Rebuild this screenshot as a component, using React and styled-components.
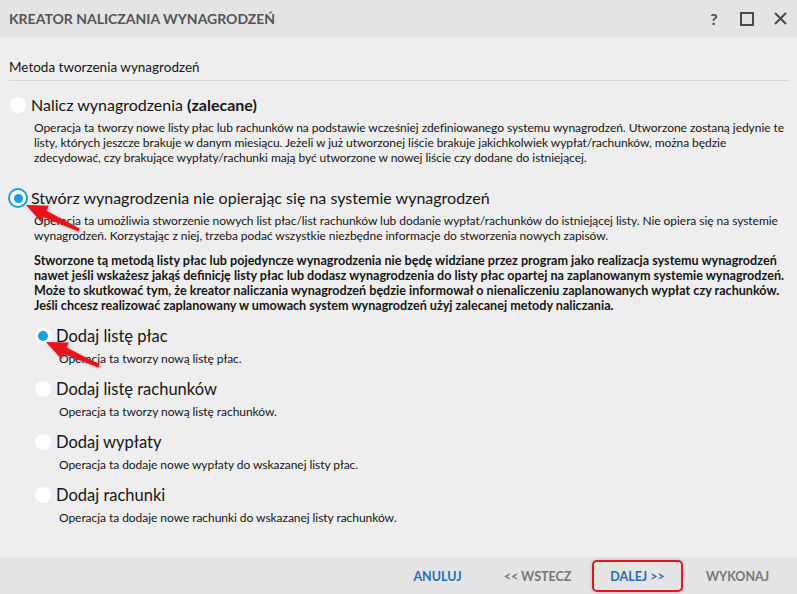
import React from 'react';
import styled, { createGlobalStyle } from 'styled-components';

const GlobalStyle = createGlobalStyle`
  html, body {
    margin: 0;
    padding: 0;
    background: #eeeeee;
  }
  body {
    font-family: Lato, "Open Sans", sans-serif;
    color: #161616;
  }
`;

const Window = styled.div`
  position: relative;
  width: 797px;
  height: 594px;
  display: flex;
  flex-direction: column;
  background: #eeeeee;
  overflow: hidden;
`;

const TitleBar = styled.div`
  height: 37px;
  flex: 0 0 37px;
  display: flex;
  align-items: center;
  justify-content: space-between;
  padding: 0 10px 0 9px;
  background: #e4e4e4;
`;

const Title = styled.div`
  font-size: 14px;
  font-weight: 700;
  color: #555555;
`;

const WindowButtons = styled.div`
  display: flex;
  align-items: center;
  gap: 20px;
  color: #4a4a4a;
`;

const HelpGlyph = styled.span`
  font-size: 16px;
  font-weight: 700;
  width: 12px;
  text-align: center;
`;

const Body = styled.div`
  flex: 1;
  padding: 21px 8px 0 9px;
`;

const SectionHeader = styled.div`
  font-size: 13.5px;
  line-height: 18px;
  padding-bottom: 4px;
  border-bottom: 1px solid #d4d4d4;
`;

const Option = styled.div`
  margin-top: ${({ gap }) => gap}px;
  padding-left: ${({ indent }) => indent}px;
`;

const OptionRow = styled.label`
  display: flex;
  align-items: center;
  gap: 5px;
  font-size: ${({ small }) => (small ? 16.5 : 16)}px;
  line-height: 22px;
`;

const Radio = styled.span`
  width: 16px;
  height: 16px;
  flex: 0 0 16px;
  border-radius: 50%;
  background: #ffffff;
  box-shadow: ${({ focused }) => (focused ? '0 0 0 2px #1a9fe0' : 'none')};
  display: flex;
  align-items: center;
  justify-content: center;

  &::after {
    content: '';
    display: ${({ checked }) => (checked ? 'block' : 'none')};
    width: ${({ focused }) => (focused ? 9 : 10)}px;
    height: ${({ focused }) => (focused ? 9 : 10)}px;
    border-radius: 50%;
    background: #1a9fe0;
  }
`;

const Desc = styled.div`
  margin-top: ${({ gap }) => gap || 4}px;
  padding-left: ${({ indent }) => indent}px;
  font-size: ${({ bold }) => (bold ? 12.6 : 12)}px;
  line-height: 15px;
  font-weight: ${({ bold }) => (bold ? 700 : 400)};
  white-space: nowrap;
  letter-spacing: ${({ bold }) => (bold ? '0' : '-0.05px')};
`;

const Footer = styled.div`
  height: 37px;
  flex: 0 0 37px;
  display: flex;
  align-items: center;
  justify-content: flex-end;
  gap: 9px;
  padding-right: 14px;
  background: #e4e4e4;
`;

const FooterButton = styled.button`
  width: 91px;
  height: 32px;
  margin-top: 1px;
  border: 2px solid ${({ highlighted }) => (highlighted ? '#e2141c' : 'transparent')};
  border-radius: 5px;
  box-shadow: ${({ highlighted }) => (highlighted ? '0 0 3px rgba(0,0,0,0.25)' : 'none')};
  background: transparent;
  font-family: Lato, "Open Sans", sans-serif;
  font-size: 12.5px;
  font-weight: 700;
  color: ${({ primary }) => (primary ? '#1c6fb5' : '#777777')};
  cursor: pointer;
  padding: 0;
`;

const Annotations = styled.svg`
  position: absolute;
  left: 0;
  top: 0;
  pointer-events: none;
  filter: drop-shadow(1px 1px 1.5px rgba(0, 0, 0, 0.3));
`;

function arrowPoints([x1, y1], [x2, y2]) {
  const dx = x2 - x1;
  const dy = y2 - y1;
  const len = Math.hypot(dx, dy);
  const ux = dx / len;
  const uy = dy / len;
  const nx = -uy;
  const ny = ux;
  const head = 21;
  const bx = x2 - ux * head;
  const by = y2 - uy * head;
  const pts = [
    [x1 + nx * 1.5, y1 + ny * 1.5],
    [bx + nx * 3.5, by + ny * 3.5],
    [bx + nx * 9, by + ny * 9],
    [x2, y2],
    [bx - nx * 9, by - ny * 9],
    [bx - nx * 3.5, by - ny * 3.5],
    [x1 - nx * 1.5, y1 - ny * 1.5],
  ];
  return pts.map((p) => p.map((v) => v.toFixed(1)).join(',')).join(' ');
}

const subOptions = [
  { label: 'Dodaj listę płac', desc: 'Operacja ta tworzy nową listę płac.', checked: true },
  { label: 'Dodaj listę rachunków', desc: 'Operacja ta tworzy nową listę rachunków.' },
  { label: 'Dodaj wypłaty', desc: 'Operacja ta dodaje nowe wypłaty do wskazanej listy płac.' },
  { label: 'Dodaj rachunki', desc: 'Operacja ta dodaje nowe rachunki do wskazanej listy rachunków.' },
];

export default function App() {
  return (
    <Window>
      <GlobalStyle />
      <TitleBar>
        <Title>KREATOR NALICZANIA WYNAGRODZEŃ</Title>
        <WindowButtons>
          <HelpGlyph>?</HelpGlyph>
          <svg width="14" height="14" viewBox="0 0 14 14">
            <rect x="1" y="1" width="12" height="12" fill="none" stroke="currentColor" strokeWidth="2" />
          </svg>
          <svg width="13" height="13" viewBox="0 0 13 13">
            <path d="M1 1 L12 12 M12 1 L1 12" stroke="currentColor" strokeWidth="2" />
          </svg>
        </WindowButtons>
      </TitleBar>

      <Body>
        <SectionHeader>Metoda tworzenia wynagrodzeń</SectionHeader>

        <Option gap={13} indent={1}>
          <OptionRow>
            <Radio />
            <span>Nalicz wynagrodzenia <b>(zalecane)</b></span>
          </OptionRow>
          <Desc indent={24}>
            Operacja ta tworzy nowe listy płac lub rachunków na podstawie wcześniej zdefiniowanego systemu wynagrodzeń. Utworzone zostaną jedynie te<br />
            listy, których jeszcze brakuje w danym miesiącu. Jeżeli w już utworzonej liście brakuje jakichkolwiek wypłat/rachunków, można będzie<br />
            zdecydować, czy brakujące wypłaty/rachunki mają być utworzone w nowej liście czy dodane do istniejącej.
          </Desc>
        </Option>

        <Option gap={22} indent={1}>
          <OptionRow>
            <Radio checked focused />
            <span>Stwórz wynagrodzenia nie opierając się na systemie wynagrodzeń</span>
          </OptionRow>
          <Desc indent={24}>
            Operacja ta umożliwia stworzenie nowych list płac/list rachunków lub dodanie wypłat/rachunków do istniejącej listy. Nie opiera się na systemie<br />
            wynagrodzeń. Korzystając z niej, trzeba podać wszystkie niezbędne informacje do stworzenia nowych zapisów.
          </Desc>
          <Desc indent={24} gap={10} bold>
            Stworzone tą metodą listy płac lub pojedyncze wynagrodzenia nie będę widziane przez program jako realizacja systemu wynagrodzeń<br />
            nawet jeśli wskażesz jakąś definicję listy płac lub dodasz wynagrodzenia do listy płac opartej na zaplanowanym systemie wynagrodzeń.<br />
            Może to skutkować tym, że kreator naliczania wynagrodzeń będzie informował o nienaliczeniu zaplanowanych wypłat czy rachunków.<br />
            Jeśli chcesz realizować zaplanowany w umowach system wynagrodzeń użyj zalecanej metody naliczania.
          </Desc>
        </Option>

        {subOptions.map((opt) => (
          <Option key={opt.label} gap={12} indent={26}>
            <OptionRow small>
              <Radio checked={opt.checked} />
              <span>{opt.label}</span>
            </OptionRow>
            <Desc indent={24}>{opt.desc}</Desc>
          </Option>
        ))}
      </Body>

      <Footer>
        <FooterButton primary>ANULUJ</FooterButton>
        <FooterButton>&lt;&lt; WSTECZ</FooterButton>
        <FooterButton primary highlighted>DALEJ &gt;&gt;</FooterButton>
        <FooterButton>WYKONAJ</FooterButton>
      </Footer>

      <Annotations width="797" height="594">
        <polygon points={arrowPoints([79, 230], [26, 205])} fill="#e8141b" />
        <polygon points={arrowPoints([99, 366], [46, 342])} fill="#e8141b" />
      </Annotations>
    </Window>
  );
}
